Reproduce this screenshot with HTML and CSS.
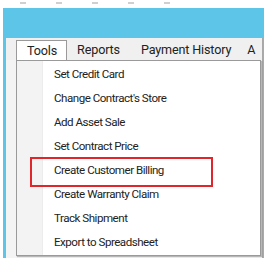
FILE: index.html
```html
<!DOCTYPE html>
<html>
<head>
<meta charset="utf-8">
<link rel="stylesheet" href="styles.css">
</head>
<body>
<div class="page">
  <div class="scraps"><span></span><span></span><span></span><span></span><span></span></div>
  <div class="window">
    <div class="titlebar"></div>
    <div class="client">
      <div class="menubar">
        <div class="menu-item tab">Tools</div>
        <div class="menu-item">Reports</div>
        <div class="menu-item">Payment History</div>
        <div class="menu-item">A</div>
      </div>
      <div class="dropdown">
        <div class="gutter"></div>
        <ul class="items">
          <li>Set Credit Card</li>
          <li>Change Contract's Store</li>
          <li>Add Asset Sale</li>
          <li>Set Contract Price</li>
          <li>Create Customer Billing</li>
          <li>Create Warranty Claim</li>
          <li>Track Shipment</li>
          <li>Export to Spreadsheet</li>
        </ul>
        <div class="highlight"></div>
      </div>
    </div>
  </div>
</div>
</body>
</html>
```

FILE: styles.css
```css
* { box-sizing: border-box; }
html, body { margin: 0; padding: 0; background: #fff; }
body { width: 266px; height: 261px; overflow: hidden; font-family: Roboto, "Open Sans", sans-serif; color: #222; }

.page { position: relative; height: 261px; }

.scraps { height: 8px; display: flex; gap: 30px; padding: 2px 0 0 20px; }
.scraps span { display: block; width: 6px; height: 2px; background: #d0d0d0; }

.window {
  margin-left: 3px;
  width: 261px;
  background: #5dc5e8;
  padding: 0 1px 0 3px;
}
.titlebar { height: 30px; }

.client {
  background: #f4f4f4;
  padding-bottom: 2px;
  padding-left: 10px;
  border-right: 1px solid #a8a8a8;
}

.menubar {
  height: 22px;
  display: flex;
  align-items: flex-end;
  background: #f0f0f0;
  margin-left: -10px;
  padding-left: 10px;
  font-size: 12.6px;
  letter-spacing: -0.15px;
  overflow: hidden;
  white-space: nowrap;
}
.menu-item {
  flex-shrink: 0;
  height: 20px;
  line-height: 19px;
  padding: 0 10px;
}
.menu-item:nth-child(2) { padding-right: 10px; }
.menu-item:nth-child(3) { padding-left: 11px; padding-right: 6px; }
.tab {
  position: relative;
  z-index: 1;
  background: #fff;
  border: 1px solid #9a9a9a;
  border-bottom: 1px solid #fff;
  height: 21px;
  margin-bottom: -1px;
  padding: 0 9px 0 10px;
}

.dropdown {
  position: relative;
  width: 245px;
  height: 196px;
  background: #fff;
  border: 1px solid #9a9a9a;
  box-shadow: 1px 1px 1px rgba(0,0,0,0.25);
  display: flex;
}
.gutter {
  width: 26px;
  background: #f3f3f3;
  border-right: 1px solid #ececec;
}
.items {
  list-style: none;
  margin: 0;
  padding: 1px 0 0 11px;
  font-size: 11.6px;
  letter-spacing: -0.5px;
}
.items li {
  height: 24px;
  line-height: 24px;
  white-space: nowrap;
}
.highlight {
  position: absolute;
  left: 13px;
  top: 96px;
  width: 183px;
  height: 30px;
  border: 2px solid #e0262b;
}
```
